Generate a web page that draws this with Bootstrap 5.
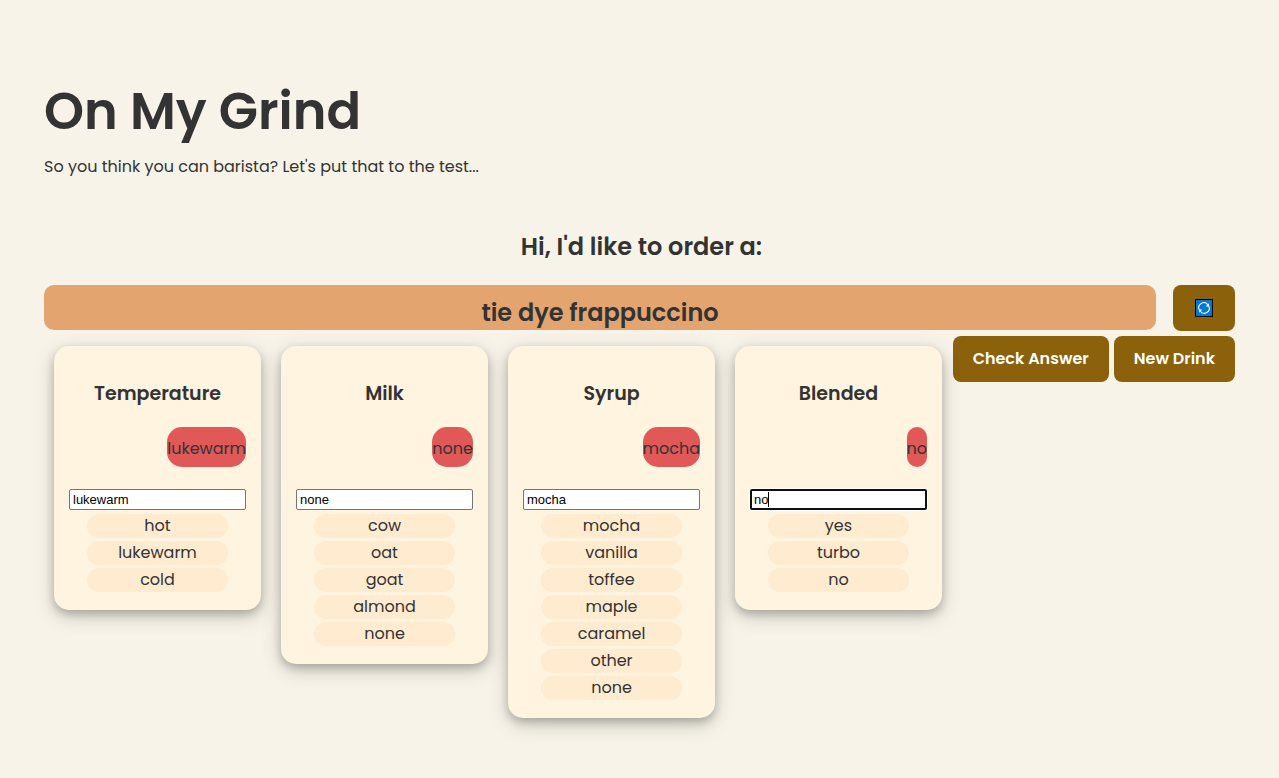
<!DOCTYPE html>
<html lang="en">
<head>
<meta charset="utf-8">
<meta name="viewport" content="width=device-width, initial-scale=1">
<title>On My Grind</title>
<link href="https://cdn.jsdelivr.net/npm/bootstrap@5.3.0/dist/css/bootstrap.min.css" rel="stylesheet">
<style>
  body { background: #f7f3e8; color: #333; font: 400 16px/24px Poppins, Inter, "Open Sans", sans-serif; }
  .page { padding: 80px 44px 32px; }
  h1 { font-size: 51px; line-height: 62px; font-weight: 600; }
  .intro { padding-top: 5px; margin-bottom: 49px; }
  .order-title { font-size: 24px; line-height: 30px; font-weight: 600; padding: 4px 0 0 4px; margin-bottom: 23px; }
  .order-row { gap: 17px; }
  .drink-name { background: #e3a470; border-radius: 10px; height: 45px; padding-top: 11px; font-size: 24px; line-height: 34px; font-weight: 600; }
  .brown-btn, .brown-btn:hover { background: #8b610b; color: #fff; border: 0; border-radius: 8px; height: 46px; padding: 0 20px; font-size: 16px; font-weight: 600; white-space: nowrap; }
  .refresh { width: 62px; }
  .board { margin-top: 5px; }
  .choices { gap: 20px; padding: 10px; }
  .choice { width: 207px; padding: 33px 15px 18px; border: 0; border-radius: 15px; background: #fff4e0; color: #333; box-shadow: 0 4px 8px 0 rgba(0,0,0,.2), 0 6px 20px 0 rgba(0,0,0,.19); }
  .choice h2 { font-size: 19px; line-height: 30px; font-weight: 600; margin-bottom: 18px; }
  .answer { background: #e05858; border-radius: 15px; height: 40px; padding-top: 10px; margin-bottom: 22px; }
  .guess { height: 21px; padding: 1px 3px; border: 1px solid #767676; border-radius: 2px; background: #fff; color: #000; font: 13px/15px "Liberation Sans", Arial, sans-serif; }
  .guess.active { outline: 0; border: 2px solid #101010; padding: 0 2px; box-shadow: 0 0 0 1px #fff; }
  .caret { left: 18px; top: 3px; width: 1px; height: 15px; background: #000; }
  .options { gap: 3px; padding-top: 4px; }
  .options li { width: 80%; height: 24px; border-radius: 12px; background: #ffebcf; }
  .actions { gap: 5px; }
</style>
</head>
<body>
<main class="page container-fluid">
  <h1 class="mb-2">On My Grind</h1>
  <p class="intro">So you think you can barista? Let's put that to the test...</p>
  <p class="order-title text-center">Hi, I'd like to order a:</p>
  <div class="order-row d-flex">
    <div class="drink-name flex-grow-1 text-center">tie dye frappuccino</div>
    <button type="button" class="brown-btn refresh d-flex align-items-center justify-content-center" aria-label="Refresh">
      <svg width="18" height="18" viewBox="0 0 18 18" aria-hidden="true">
        <path fill="#000" d="M0 0h18v18H0z"/><path fill="#0078d7" d="M1 1h16v16H1z"/>
        <g fill="none" stroke="#fff" stroke-width="1.1"><path d="M4.200 10.800a5 5 0 0 1 8.600-5M13.800 7.200a5 5 0 0 1-8.600 5"/></g>
        <path fill="#fff" d="M14 4.200v3.400h-3.400zM4 13.800v-3.400h3.400z"/>
      </svg>
    </button>
  </div>
  <div class="board d-flex flex-wrap flex-xl-nowrap align-items-start justify-content-between">
    <div class="choices d-flex flex-wrap flex-shrink-0 align-items-start">
      <section class="choice card">
        <h2 class="text-center"><label for="temperature">Temperature</label></h2>
        <div class="answer align-self-end">lukewarm</div>
        <input class="guess w-100" id="temperature" type="text" value="lukewarm">
        <ul class="options list-unstyled d-flex flex-column align-items-center text-center mb-0"><li>hot</li><li>lukewarm</li><li>cold</li></ul>
      </section>
      <section class="choice card">
        <h2 class="text-center"><label for="milk">Milk</label></h2>
        <div class="answer align-self-end">none</div>
        <input class="guess w-100" id="milk" type="text" value="none">
        <ul class="options list-unstyled d-flex flex-column align-items-center text-center mb-0"><li>cow</li><li>oat</li><li>goat</li><li>almond</li><li>none</li></ul>
      </section>
      <section class="choice card">
        <h2 class="text-center"><label for="syrup">Syrup</label></h2>
        <div class="answer align-self-end">mocha</div>
        <input class="guess w-100" id="syrup" type="text" value="mocha">
        <ul class="options list-unstyled d-flex flex-column align-items-center text-center mb-0"><li>mocha</li><li>vanilla</li><li>toffee</li><li>maple</li><li>caramel</li><li>other</li><li>none</li></ul>
      </section>
      <section class="choice card">
        <h2 class="text-center"><label for="blended">Blended</label></h2>
        <div class="answer align-self-end">no</div>
        <div class="position-relative d-flex">
          <input class="guess active w-100" id="blended" type="text" value="no">
          <span class="caret position-absolute"></span>
        </div>
        <ul class="options list-unstyled d-flex flex-column align-items-center text-center mb-0"><li>yes</li><li>turbo</li><li>no</li></ul>
      </section>
    </div>
    <div class="actions d-flex">
      <button type="button" class="brown-btn">Check Answer</button>
      <button type="button" class="brown-btn">New Drink</button>
    </div>
  </div>
</main>
<script src="https://cdn.jsdelivr.net/npm/bootstrap@5.3.0/dist/js/bootstrap.bundle.min.js"></script>
</body>
</html>
